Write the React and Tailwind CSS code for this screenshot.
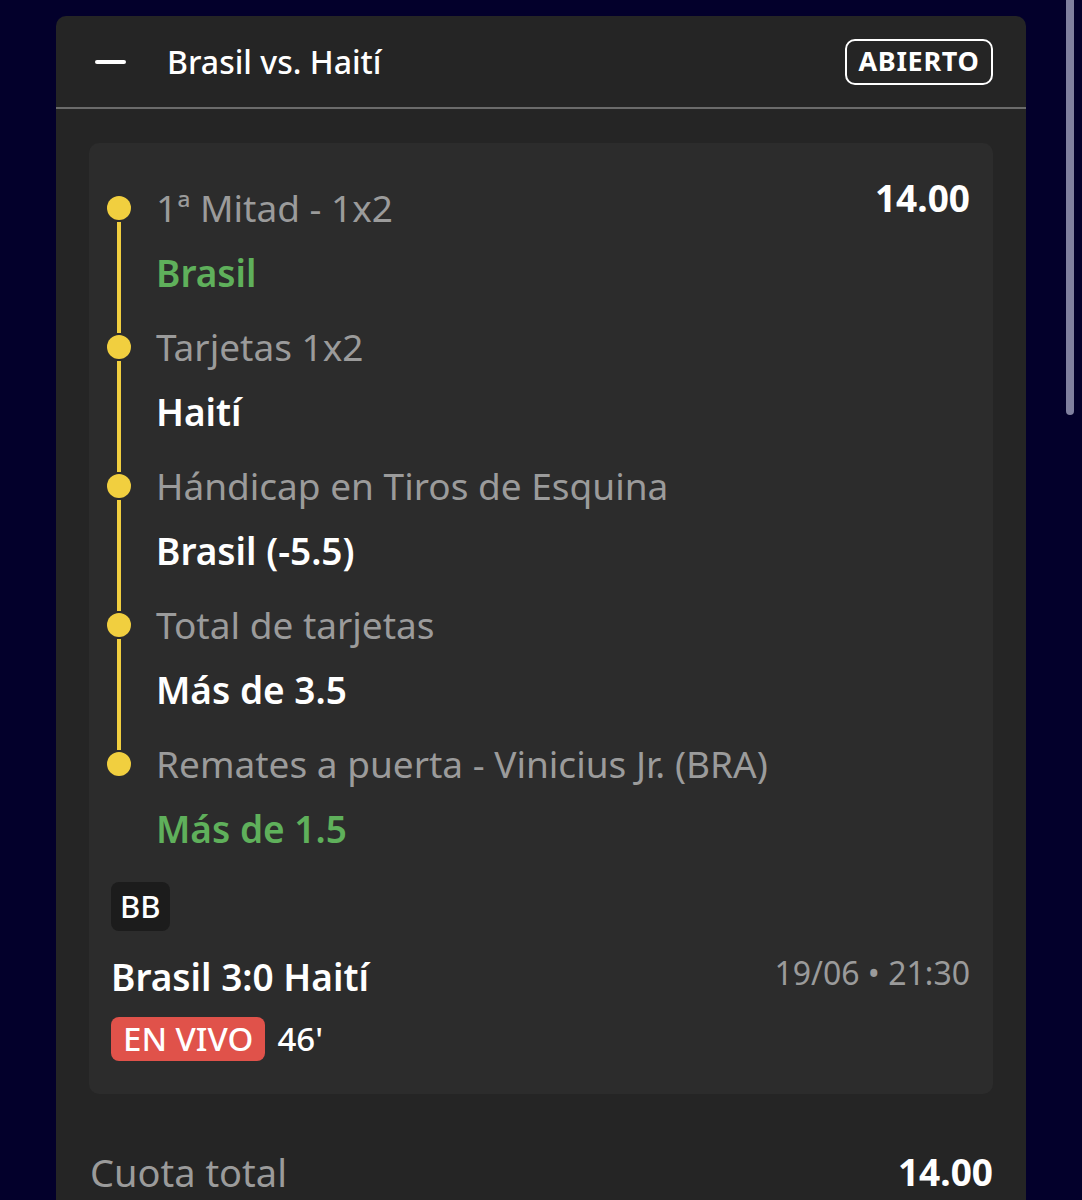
import React from 'react';

const legs = [
    { market: '1ª Mitad - 1x2', pick: 'Brasil', won: true },
    { market: 'Tarjetas 1x2', pick: 'Haití', won: false },
    { market: 'Hándicap en Tiros de Esquina', pick: 'Brasil (-5.5)', won: false },
    { market: 'Total de tarjetas', pick: 'Más de 3.5', won: false },
    { market: 'Remates a puerta - Vinicius Jr. (BRA)', pick: 'Más de 1.5', won: true },
];

function Leg({ leg, last }) {
    return (
        <div className="flex">
            <div className="flex w-6 flex-col items-center">
                <div className="mt-[10px] h-6 w-6 shrink-0 rounded-full bg-[#f1cf3f]" />
                {!last && <div className="mt-[2px] -mb-2 w-1 flex-1 bg-[#f1cf3f]" />}
            </div>
            <div className={`ml-[25px] ${last ? 'pb-0' : 'pb-[30px]'}`}>
                <div className="text-[37px] leading-[44px] text-[#9b9b9b]">{leg.market}</div>
                <div className={`mt-[21px] text-[37px] font-semibold leading-[44px] ${leg.won ? 'text-[#5fb05b]' : 'text-white'}`}>
                    {leg.pick}
                </div>
            </div>
        </div>
    );
}

export default function App() {
    return (
        <div className="relative min-h-[1200px] overflow-hidden bg-[#03002b] pt-4" style={{ fontFamily: '"Noto Sans", sans-serif' }}>
            {/* scrollbar */}
            <div className="absolute left-[1066px] top-0 h-[415px] w-[8px] rounded-b-full bg-[#80809f]" />

            <div className="ml-[56px] w-[970px] rounded-t-[10px] bg-[#252525]">
                {/* Header */}
                <div className="flex h-[91px] items-center pl-[39px] pr-[33px]">
                    <div className="h-[4px] w-[31px] rounded-full bg-white" />
                    <div className="ml-[41px] flex-1 text-[32px] font-medium text-white">Brasil vs. Haití</div>
                    <div className="flex h-[46px] w-[148px] items-center justify-center rounded-[10px] border-2 border-white text-[27px] font-bold tracking-wide text-white">
                        ABIERTO
                    </div>
                </div>
                <div className="h-[2px] bg-[#6b6b6b]" />

                <div className="px-[33px] pt-[34px] pb-10">
                    {/* Bet card */}
                    <div className="rounded-[10px] bg-[#2c2c2c] pt-[43px] pr-[23px] pb-[30px] pl-[18px]">
                        <div className="flex items-start justify-between">
                            <div>
                                {legs.map((leg, i) => (
                                    <Leg key={i} leg={leg} last={i === legs.length - 1} />
                                ))}
                            </div>
                            <div className="-mt-[10px] text-[37px] font-bold leading-[44px] text-white">14.00</div>
                        </div>

                        <div className="pl-[4px]">
                            <div className="mt-[31px] inline-flex h-[49px] items-center rounded-[8px] bg-[#1c1c1c] px-[9px] text-[31px] font-medium text-white">
                                BB
                            </div>
                            <div className="mt-[24px] flex items-center justify-between">
                                <div className="text-[37px] font-semibold leading-[44px] text-white">Brasil 3:0 Haití</div>
                                <div className="-mt-[8px] text-[32px] leading-[44px] text-[#9b9b9b]">19/06 • 21:30</div>
                            </div>
                            <div className="mt-[15px] flex items-center">
                                <div className="flex h-[44px] items-center rounded-[8px] bg-[#e0524a] px-[12px] text-[33px] font-medium text-white">
                                    EN VIVO
                                </div>
                                <div className="ml-[12px] text-[33px] font-medium text-white">46'</div>
                            </div>
                        </div>
                    </div>

                    {/* Total odds */}
                    <div className="mt-[56px] flex items-center justify-between pl-[1px]">
                        <div className="text-[38px] leading-[44px] text-[#9b9b9b]">Cuota total</div>
                        <div className="text-[37px] font-bold leading-[44px] text-white">14.00</div>
                    </div>
                </div>
            </div>
        </div>
    );
}
